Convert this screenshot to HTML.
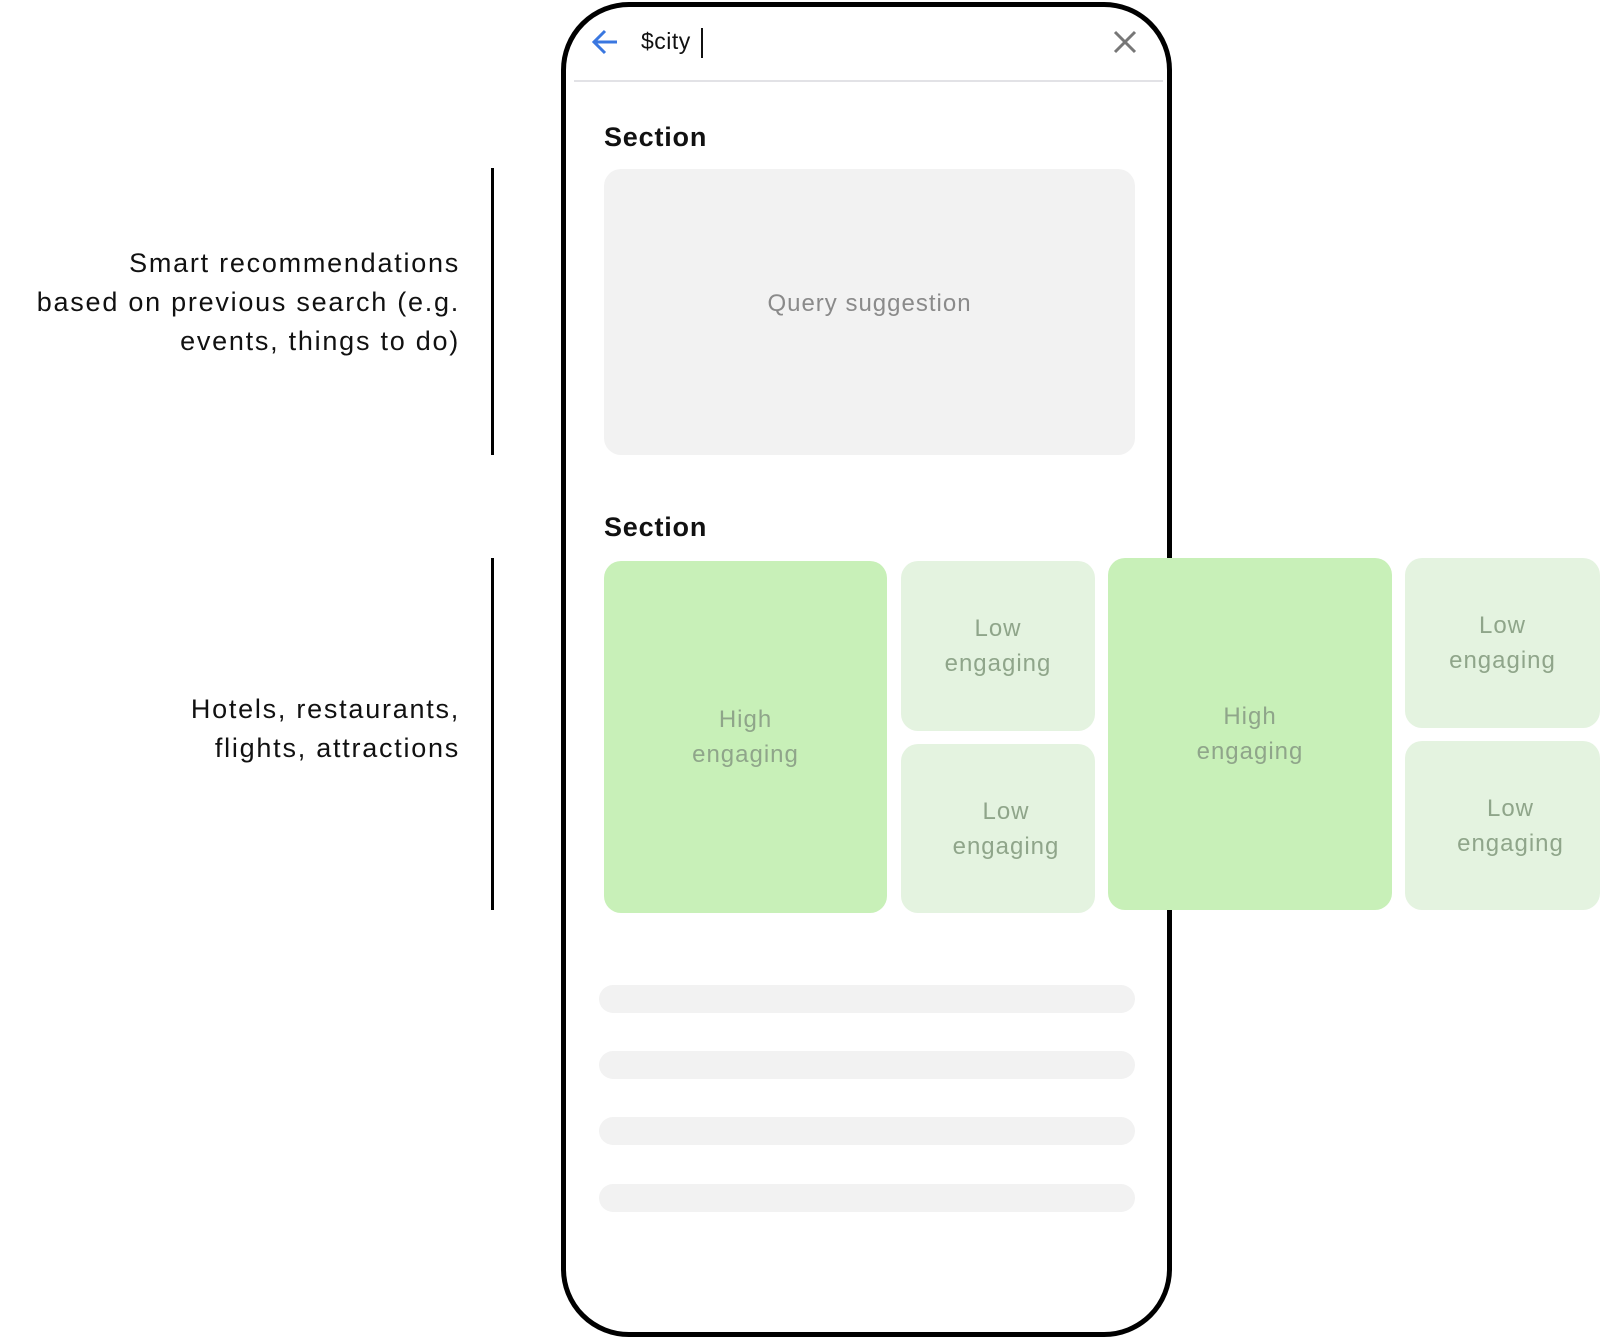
<!DOCTYPE html>
<html><head><meta charset="utf-8"><style>
*{margin:0;padding:0;box-sizing:border-box}
body{width:1600px;height:1338px;background:#fff;position:relative;overflow:hidden;font-family:"Liberation Sans",sans-serif}
.abs{position:absolute}
.phone{left:561px;top:2px;width:611px;height:1335px;border:5px solid #000;border-radius:68px;background:#fff}
.note{right:1140px;text-align:right;font-size:27px;letter-spacing:1.75px;line-height:39px;color:#111;white-space:nowrap}
.vline{left:491px;width:3px;background:#000}
.sec{left:604px;font-size:27px;font-weight:bold;color:#111;letter-spacing:0.8px}
.card{border-radius:17px;display:flex;align-items:center;justify-content:center;text-align:center;font-size:24px;letter-spacing:1px;line-height:35px;color:#8fa58a}
.hi{background:#c8f0b8}
.lo{background:#e4f3e0}
.bar{left:599px;width:536px;height:28px;border-radius:14px;background:#f2f2f2}
</style></head><body>
<div class="abs phone"></div>
<svg class="abs" style="left:590px;top:28px" width="32" height="28" viewBox="0 0 32 28"><path d="M27 14H5M15 3L4 14l11 11" fill="none" stroke="#3a77e0" stroke-width="3"/></svg>
<div class="abs" style="left:641px;top:28px;font-size:23px;letter-spacing:0.5px;color:#111">$city</div>
<div class="abs" style="left:701px;top:28px;width:2px;height:30px;background:#111"></div>
<svg class="abs" style="left:1112px;top:29px" width="26" height="26" viewBox="0 0 26 26"><path d="M3 3L23 23M23 3L3 23" stroke="#777" stroke-width="3"/></svg>
<div class="abs" style="left:574px;top:80px;width:589px;height:2px;background:#e2e2e6"></div>
<div class="abs sec" style="top:122px">Section</div>
<div class="abs card" style="left:604px;top:169px;width:531px;height:286px;background:#f2f2f2;color:#8a8a8a;padding-bottom:18px">Query suggestion</div>
<div class="abs sec" style="top:512px">Section</div>
<div class="abs card hi" style="left:604px;top:561px;width:283px;height:352px">High<br>engaging</div>
<div class="abs card lo" style="left:901px;top:561px;width:194px;height:170px">Low<br>engaging</div>
<div class="abs card lo" style="left:901px;top:744px;width:194px;height:169px"><span style="margin-left:16px">Low<br>engaging</span></div>
<div class="abs card hi" style="left:1108px;top:558px;width:284px;height:352px">High<br>engaging</div>
<div class="abs card lo" style="left:1405px;top:558px;width:195px;height:170px">Low<br>engaging</div>
<div class="abs card lo" style="left:1405px;top:741px;width:195px;height:169px"><span style="margin-left:16px">Low<br>engaging</span></div>
<div class="abs bar" style="top:985px"></div>
<div class="abs bar" style="top:1051px"></div>
<div class="abs bar" style="top:1117px"></div>
<div class="abs bar" style="top:1184px"></div>
<div class="abs vline" style="top:168px;height:287px"></div>
<div class="abs vline" style="top:558px;height:352px"></div>
<div class="abs note" style="top:244px">Smart recommendations<br>based on previous search (e.g.<br>events, things to do)</div>
<div class="abs note" style="top:690px">Hotels, restaurants,<br>flights, attractions</div>
</body></html>
